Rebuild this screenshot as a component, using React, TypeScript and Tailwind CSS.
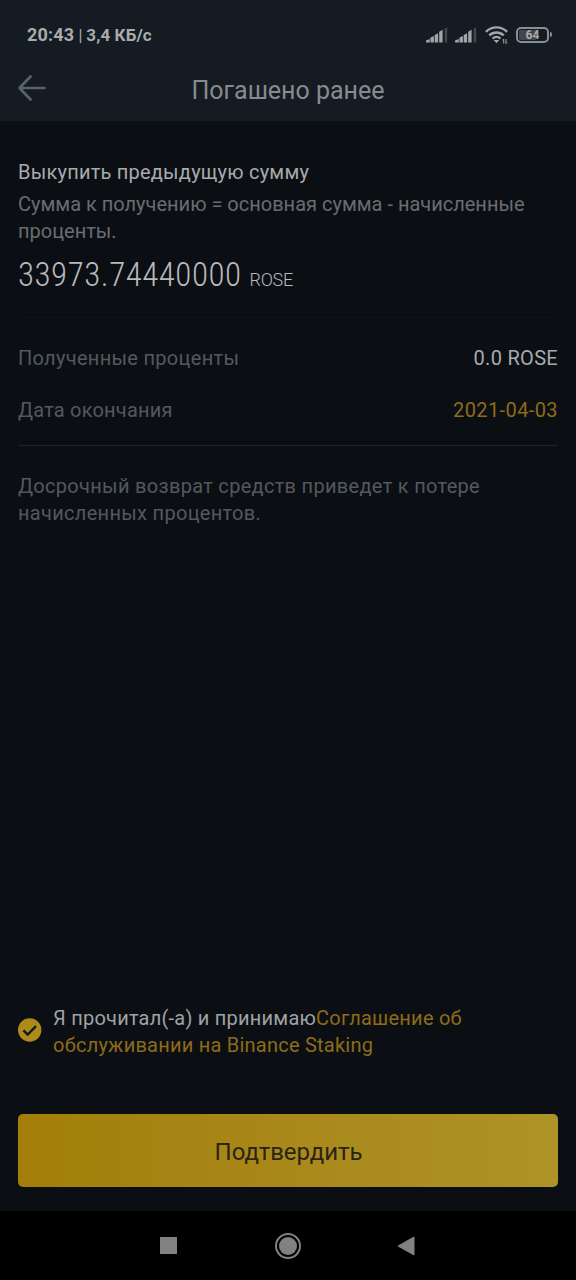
function SignalIcon() {
  return (
    <svg width="22" height="16" viewBox="0 0 22 16" fill="#a3a5a7">
      <path d="M0 15.500v-2l3.800-1.400v3.400z" />
      <path d="M4.500 15.500v-4.900l3.400-1.500v6.400z" />
      <path d="M8.700 15.500V8l3.400-1.800v9.300z" />
      <path d="M13.200 15.500V4.800l3.400-2v12.700z" />
      <path d="M18.700 15.500V1.600L21.200.2v15.300z" fill="#42474d" />
    </svg>
  )
}

function WifiIcon() {
  return (
    <svg width="24" height="18" viewBox="0 0 24 18" fill="none" stroke="#a3a5a7" strokeWidth="2.4">
      <path d="M.9 5.8C6.8-.1 16.200-.1 22.100 5.800" />
      <path d="M4.300 9.400C8.300 5.500 14.700 5.500 18.700 9.400" />
      <path d="M7.600 12.600C9.900 10.500 13.100 10.500 15.400 12.600" />
      <path d="M8.700 14h5.600L11.500 17.200z" fill="#a3a5a7" stroke="none" />
      <path d="M18.700 17.500v-4.500M21 13V17.500" strokeWidth="1" />
      <path d="M17.600 14.300l1.100-1.300M22.100 16.200L21 17.500" strokeWidth="1" />
    </svg>
  )
}

function Battery({ level }: { level: number }) {
  return (
    <div className="flex items-center">
      <div className="flex h-[16px] w-[33px] items-center justify-center rounded-[5px] border-2 border-[#8b8e91] p-px">
        <div className="flex h-full w-full items-center justify-center rounded-[2px] bg-[linear-gradient(90deg,#42474d_62%,transparent_62%)]">
          <span className="text-[12px] font-bold leading-none text-[#aaacae]">{level}</span>
        </div>
      </div>
      <div className="ml-px h-[5px] w-[2px] rounded-r-sm bg-[#8b8e91]" />
    </div>
  )
}

function StatusBar() {
  return (
    <div className="flex h-[69px] items-center justify-between pl-[27px] pr-[24px]">
      <p className="flex items-baseline gap-1 font-bold text-[#a9abad]">
        <span className="text-[18px] tracking-[0.200px]">20:43</span>
        <span className="text-[16px] font-normal">|</span>
        <span className="text-[17px] tracking-[0.100px]">3,4 КБ/с</span>
      </p>
      <div className="flex items-center">
        <SignalIcon />
        <span className="w-[7px]" />
        <SignalIcon />
        <span className="w-[8px]" />
        <WifiIcon />
        <span className="w-[7px]" />
        <Battery level={64} />
      </div>
    </div>
  )
}

function Header() {
  return (
    <header className="h-[121px] bg-[#151b23]">
      <StatusBar />
      <div className="grid h-[42px] grid-cols-[1fr_auto_1fr] items-center px-[18px]">
        <svg className="-mt-[5px]" width="28" height="26" viewBox="0 0 28 26" fill="none" stroke="#59636a" strokeWidth="2.600" strokeLinecap="round" strokeLinejoin="round">
          <path d="M12.500 1.500L1.500 13l11 11.500M1.500 13H26.500" />
        </svg>
        <h1 className="pt-px text-[25px] leading-[42px] text-[#888b8e]">Погашено ранее</h1>
      </div>
    </header>
  )
}

function NavBar() {
  return (
    <nav className="flex h-[69px] items-center justify-between bg-black pl-[160px] pr-[161px]">
      <div className="size-[17px] bg-[#818181]" />
      <svg className="ml-px" width="26" height="26" viewBox="0 0 26 26">
        <circle cx="13" cy="13" r="12" fill="none" stroke="#818181" strokeWidth="2" />
        <circle cx="13" cy="13" r="9" fill="#818181" />
      </svg>
      <svg width="18" height="20" viewBox="0 0 18 20">
        <path d="M1 10L17 1v18z" fill="#818181" stroke="#818181" strokeLinejoin="round" />
      </svg>
    </nav>
  )
}

export default function App() {
  return (
    <div className="flex h-[1280px] w-[576px] flex-col bg-[#0b0f14] font-['Roboto',sans-serif]">
      <Header />

      <main className="flex flex-1 flex-col px-[18px] pt-[37px]">
        <h2 className="text-[20px] leading-7 tracking-[0.220px] text-[#a8aaac]">Выкупить предыдущую сумму</h2>
        <p className="mt-[5px] text-[20px] leading-[27px] text-[#696c70]">
          Сумма к получению = основная сумма - начисленные<br />проценты.
        </p>
        <p className="mt-[10px] flex items-baseline gap-2 font-light leading-10 text-[#b8babc]">
          <span className="text-[33px] tracking-[0.500px] font-stretch-[75%]">33973.74440000</span>
          <span className="text-[18px] tracking-[-0.300px]">ROSE</span>
        </p>

        <div className="mt-[17px] flex flex-col gap-[24px] border-y border-t-[#0d121c] border-b-[#1d222b] pb-[21px] pt-[26px] text-[20px] leading-7">
          <div className="flex justify-between">
            <span className="tracking-[0.300px] text-[#54585e]">Полученные проценты</span>
            <span className="tracking-[0.300px] text-[#a8aaac]">0.0 ROSE</span>
          </div>
          <div className="flex justify-between">
            <span className="tracking-[0.200px] text-[#54585e]">Дата окончания</span>
            <span className="tracking-[0.400px] text-[#8d6b19]">2021-04-03</span>
          </div>
        </div>

        <p className="mt-[27px] text-[20px] leading-[27px] tracking-[0.300px] text-[#54585e]">
          Досрочный возврат средств приведет к потере<br />начисленных процентов.
        </p>

        <div className="mt-auto flex items-center">
          <svg className="mt-[-4px]" width="24" height="24" viewBox="0 0 24 24">
            <circle cx="11.700" cy="12" r="11.700" fill="#ad8b1b" />
            <path d="M5.500 12.300l4.200 4.200 8.300-8.300" fill="none" stroke="#15171a" strokeWidth="2.400" />
          </svg>
          <p className="ml-[11px] text-[20px] leading-[27px] tracking-[0.230px] text-[#a0a2a5]">
            Я прочитал(-а) и принимаю<span className="text-[#8d6b19]">Соглашение об<br />обслуживании на Binance Staking</span>
          </p>
        </div>

        <button className="mb-6 mt-[55px] h-[73px] w-full rounded-[5px] bg-linear-to-r from-[#a37e08] to-[#ae9326] pl-px pt-[2px] text-[24px] tracking-[-0.050px] text-[#2a2414]">
          Подтвердить
        </button>
      </main>

      <NavBar />
    </div>
  )
}
